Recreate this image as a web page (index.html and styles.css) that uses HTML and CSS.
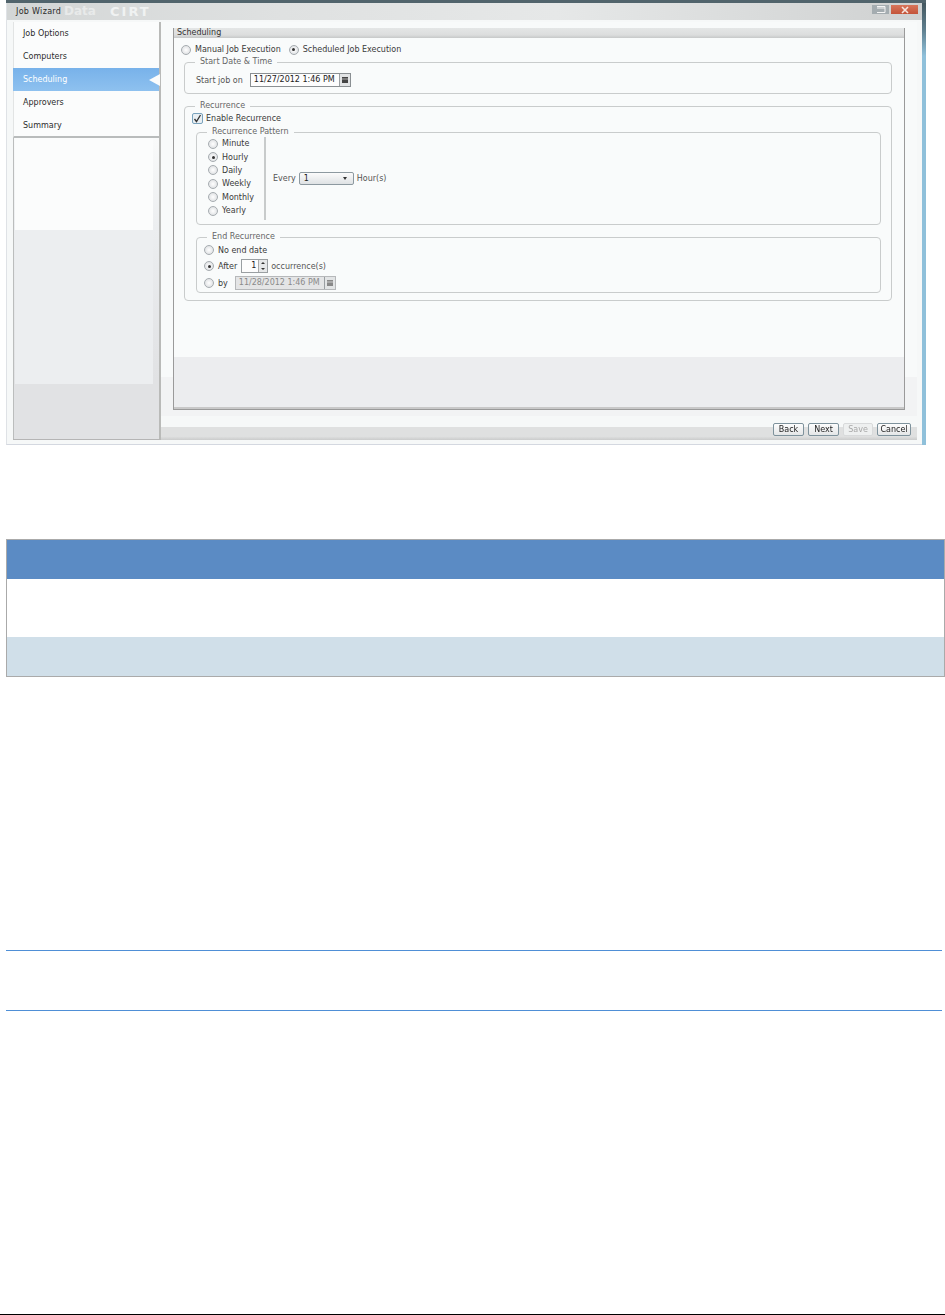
FILE: index.html
```html
<!DOCTYPE html>
<html lang="en">
<head>
<meta charset="utf-8">
<title>Job Wizard</title>
<link rel="stylesheet" href="styles.css">
</head>
<body>
<div class="page">
  <section class="shot">
    <div class="topstrip"></div>
    <div class="winrow">
      <div class="window">
        <header class="titlebar">
          <span class="title">Job Wizard</span>
          <span class="ghost">Data</span>
          <span class="ghost ghost-b">CIRT</span>
          <div class="winbtns">
            <span class="winbtn restore"><svg width="10" height="7" viewBox="0 0 10 7"><path d="M1 .5h8v6H1M1 2h8" fill="none" stroke="#f4f4f4" stroke-width="1"/></svg></span>
            <span class="winbtn close"><svg width="10" height="8" viewBox="0 0 10 8"><path d="M2 1l6 6M8 1L2 7" fill="none" stroke="#f6e6e0" stroke-width="1.6"/></svg></span>
          </div>
        </header>
        <div class="wizard">
          <nav class="side">
            <ul class="steps">
              <li class="step">Job Options</li>
              <li class="step">Computers</li>
              <li class="step active">Scheduling</li>
              <li class="step">Approvers</li>
              <li class="step">Summary</li>
            </ul>
            <div class="side-low">
              <div class="side-a"></div>
              <div class="side-b"></div>
            </div>
          </nav>
          <main class="content">
            <div class="panelwrap">
              <div class="panel">
                <div class="panelhead">Scheduling</div>
                <div class="panelbody">
                  <div class="row toprow">
                    <span class="radio"></span><span class="lbl">Manual Job Execution</span>
                    <span class="radio on"></span><span class="lbl">Scheduled Job Execution</span>
                  </div>
                  <fieldset class="fs fs-start">
                    <legend>Start Date &amp; Time</legend>
                    <div class="row startrow">
                      <span class="lbl soft">Start job on</span>
                      <span class="date"><span class="dateval">11/27/2012 1:46 PM</span><span class="cal"><svg width="6" height="6" viewBox="0 0 6 6"><rect width="6" height="6" fill="#444"/><path d="M0 2h6" stroke="#ccc" stroke-width=".8"/></svg></span></span>
                    </div>
                  </fieldset>
                  <fieldset class="fs fs-rec">
                    <legend>Recurrence</legend>
                    <div class="row enable">
                      <span class="check"><svg width="11" height="11" viewBox="0 0 11 11"><path d="M2.5 6l2 2.5L8.5 2" fill="none" stroke="#333" stroke-width="1.3"/></svg></span>
                      <span class="lbl">Enable Recurrence</span>
                    </div>
                    <fieldset class="fs fs-pat">
                      <legend>Recurrence Pattern</legend>
                      <div class="pat">
                        <div class="patlist">
                          <div class="row r"><span class="radio"></span><span class="lbl">Minute</span></div>
                          <div class="row r"><span class="radio on"></span><span class="lbl">Hourly</span></div>
                          <div class="row r"><span class="radio"></span><span class="lbl">Daily</span></div>
                          <div class="row r"><span class="radio"></span><span class="lbl">Weekly</span></div>
                          <div class="row r"><span class="radio"></span><span class="lbl">Monthly</span></div>
                          <div class="row r"><span class="radio"></span><span class="lbl">Yearly</span></div>
                        </div>
                        <div class="row every">
                          <span class="lbl soft">Every</span>
                          <span class="combo"><span>1</span><span class="arrow"></span></span>
                          <span class="lbl soft">Hour(s)</span>
                        </div>
                      </div>
                    </fieldset>
                    <fieldset class="fs fs-end">
                      <legend>End Recurrence</legend>
                      <div class="row e1"><span class="radio"></span><span class="lbl">No end date</span></div>
                      <div class="row e2"><span class="radio on"></span><span class="lbl">After</span>
                        <span class="spin"><span class="spinval">1</span><span class="spinbtns"><i class="up"></i><i class="down"></i></span></span>
                        <span class="lbl soft">occurrence(s)</span></div>
                      <div class="row e3"><span class="radio"></span><span class="lbl">by</span>
                        <span class="date off"><span class="dateval">11/28/2012 1:46 PM</span><span class="cal"><svg width="6" height="6" viewBox="0 0 6 6"><rect width="6" height="6" fill="#888"/><path d="M0 2h6" stroke="#ddd" stroke-width=".8"/></svg></span></span></div>
                    </fieldset>
                  </fieldset>
                </div>
                <div class="panelfoot"></div>
              </div>
            </div>
            <footer class="actions">
              <button class="btn">Back</button>
              <button class="btn">Next</button>
              <button class="btn dis">Save</button>
              <button class="btn">Cancel</button>
            </footer>
          </main>
        </div>
      </div>
      <div class="edge"></div>
    </div>
  </section>
  <section class="table">
    <div class="thead"></div>
    <div class="tbody"></div>
    <div class="tfoot"></div>
  </section>
  <section class="rule-box"></section>
  <div class="pageline"></div>
</div>
</body>
</html>
```
FILE: styles.css
```css
* { box-sizing: border-box; }
html, body { margin: 0; padding: 0; background: #fff; }
body { font-family: "DejaVu Sans", sans-serif; font-size: 8px; color: #333; }
.page { width: 945px; height: 1315px; display: flex; flex-direction: column; overflow: hidden; }

.shot { margin-left: 6px; width: 920px; height: 445px; flex: none; display: flex; flex-direction: column; filter: blur(0.4px); }
.topstrip { height: 3px; background: #51646c; flex: none; }
.winrow { flex: 1; display: flex; min-height: 0; }
.edge { width: 4px; flex: none; background: linear-gradient(#44575f, #5f7f8e 6%, #8fc0da 12%, #8fc0da); }
.window { flex: 1; min-width: 0; display: flex; flex-direction: column; background: #f6f8f8; border-left: 1px solid #dfe2e6; border-bottom: 1px solid #d4d8e0; }
.titlebar { height: 17px; flex: none; display: flex; align-items: center; position: relative; overflow: hidden; padding-left: 9px; background: linear-gradient(90deg, #d3d6d6, #dfe1e1 30%, #e6e8e8 60%, #cfd1d1); }
.title { color: #2a2a2a; font-size: 8px; letter-spacing: 0.3px; }
.ghost { position: absolute; left: 57px; top: 1px; font-size: 12px; font-weight: bold; color: #e8eaea; white-space: nowrap; }
.ghost-b { left: 103px; font-size: 13px; letter-spacing: 2px; color: #f0f2f2; }
.winbtns { margin-left: auto; margin-right: 4px; display: flex; gap: 2px; align-self: flex-start; margin-top: 2px; }
.winbtn { height: 9px; display: flex; align-items: center; justify-content: center; }
.restore { width: 17px; background: #a4acb0; }
.close { width: 27px; background: linear-gradient(#d8755a, #c3543a); }

.wizard { flex: 1; display: flex; padding: 2px 5px 4px 6px; min-height: 0; }
.side { width: 148px; flex: none; display: flex; flex-direction: column; border-bottom: 1px solid #b5b5b5; border-right: 2px solid #b9bab8; background: #fbfcfc; }
.steps { list-style: none; margin: 0; padding: 0; height: 116px; flex: none; border-bottom: 2px solid #b9bcbc; border-left: 1px solid #e2e4e4; }
.step { height: 23px; display: flex; align-items: center; padding-left: 9px; color: #2c2c2c; font-size: 8px; }
.step.active { color: #fff; background: linear-gradient(#78b2ea, #8ec1ef); position: relative; margin-left: -1px; padding-left: 10px; }
.step.active::after { content: ""; position: absolute; right: -1px; top: 6px; border: 6px solid transparent; border-right: 11px solid #fbfcfc; border-left: 0; }
.side-low { flex: 1; min-height: 0; display: flex; flex-direction: column; background: linear-gradient(#f9fafa, #eceef0 30%, #e1e2e4 80%); border-left: 1px solid #bbbdbd; padding-left: 1px; }
.side-a { height: 92px; flex: none; margin-right: 6px; background: #fbfcfc; }
.side-b { height: 154px; flex: none; margin-right: 6px; background: #eceef0; }

.content { flex: 1; display: flex; flex-direction: column; min-width: 0; }
.panelwrap { flex: 1; padding: 6px 12px 6px 12px; min-height: 0; background: linear-gradient(#f8fafa 90%, #f2f3f4 90%); }
.panel { height: 382px; border: 1px solid #9a9a9a; border-top: 0; display: flex; flex-direction: column; background: #f9fbfb; }
.panelhead { height: 10px; flex: none; padding-left: 3px; line-height: 10px; background: linear-gradient(#e4e6e6, #dcdddd 70%, #c6c8c8); color: #333; }
.panelbody { flex: 1; min-height: 0; padding: 5px 12px 0 10px; }
.panelfoot { height: 52px; flex: none; background: #ecedef; border-bottom: 2px solid #c8c8c8; }
.actions { height: 24px; flex: none; display: flex; justify-content: flex-end; align-items: center; gap: 4px; padding: 3px 6px 0 0; background: linear-gradient(#f6f8f8 45%, #dfe0e0 45%, #dfe0e0 85%, #cbcccc); }
.btn { width: 31px; height: 13px; padding: 0; font: 8px "DejaVu Sans", sans-serif; color: #222; border: 1px solid #7e929c; border-radius: 2px; background: linear-gradient(#fdfdfd, #e4e6e7); }
.btn:last-child { width: 34px; }
.btn.dis { width: 30px; color: #a8a8a8; border-color: #d8dadb; background: #eef0f0; }

.row { display: flex; align-items: center; }
.lbl { color: #3a3a3a; }
.soft { color: #555; }
.radio { width: 10px; height: 10px; flex: none; border-radius: 50%; border: 1px solid #a6acb0; background: radial-gradient(circle, #fff, #d6d9dc); display: flex; align-items: center; justify-content: center; margin-right: 4px; }
.radio.on::after { content: ""; width: 3px; height: 3px; border-radius: 50%; background: #333; }
.toprow { height: 13px; margin-left: -3px; }
.toprow .lbl:nth-child(2) { margin-right: 8px; }

.fs { margin: 0; padding: 0; border: 1px solid #c9cccc; border-radius: 4px; min-width: 0; }
.fs legend { margin-left: 10px; padding: 0 5px; color: #666; font-size: 8px; line-height: 10px; }
.fs-start { margin-top: 1px; height: 37px; }
.startrow { padding: 6px 0 0 11px; }
.startrow .date { margin-left: 7px; }
.fs-rec { margin-top: 7px; height: 200px; padding-top: 1px; }
.enable { padding-left: 7px; height: 13px; }
.check { width: 11px; height: 11px; flex: none; margin-right: 3px; border: 1px solid #7aa3bd; border-radius: 2px; background: #e9eff3; display: flex; align-items: center; justify-content: center; }
.check svg { flex: none; margin: -1px; }
.fs-pat { margin: 2px 10px 0 11px; height: 98px; }
.pat { display: flex; height: 83px; }
.patlist { width: 69px; flex: none; border-right: 2px solid #c8cbcb; padding-left: 11px; }
.r { height: 13.4px; }
.every { padding-left: 7px; gap: 3px; }
.combo { width: 55px; height: 13px; display: flex; align-items: center; justify-content: space-between; padding: 0 6px 0 4px; border: 1px solid #8d99a0; border-radius: 2px; background: linear-gradient(#fbfbfb, #dfe2e4); color: #222; }
.arrow { width: 0; height: 0; border: 2.5px solid transparent; border-top: 3px solid #333; border-bottom: 0; }
.fs-end { margin: 7px 10px 0 11px; height: 61px; }
.e1, .e2, .e3 { padding-left: 7px; }
.e1, .e2 { height: 16px; }
.e3 { height: 18px; }
.e2 .lbl:nth-child(2) { margin-right: 4px; }
.e3 .lbl:nth-child(2) { margin-right: 7px; }
.date { width: 101px; height: 14px; display: flex; border: 1px solid #8a8f92; background: #fdfdfd; flex: none; }
.dateval { flex: 1; padding-left: 3px; line-height: 12px; color: #222; white-space: nowrap; overflow: hidden; }
.cal { width: 11px; flex: none; border-left: 1px solid #9a9fa2; background: #e2e4e5; display: flex; align-items: center; justify-content: center; }
.date.off { background: #e4e5e6; border-color: #b6b8ba; }
.date.off .dateval { color: #8a8a8a; }
.spin { width: 27px; height: 14px; margin-right: 3px; display: flex; border: 1px solid #9a9fa2; background: #fdfdfd; flex: none; }
.spinval { flex: 1; text-align: right; padding-right: 2px; line-height: 11px; color: #222; }
.spinbtns { width: 9px; flex: none; display: flex; flex-direction: column; border-left: 1px solid #aaa; background: #e6e8e9; }
.spinbtns i { flex: 1; display: flex; align-items: center; justify-content: center; }
.up::after { content: ""; border: 2px solid transparent; border-bottom: 2px solid #333; border-top: 0; }
.down::after { content: ""; border: 2px solid transparent; border-top: 2px solid #333; border-bottom: 0; }

.table { margin: 94px 0 0 6px; height: 138px; flex: none; border: 1px solid #aaa; display: flex; flex-direction: column; }
.thead { height: 39px; flex: none; background: #5b8bc4; }
.tbody { height: 58px; flex: none; background: #fff; }
.tfoot { flex: 1; background: #d0dfe9; }
.rule-box { margin: 273px 3px 0 6px; height: 61px; flex: none; border-top: 1px solid #4f8fd6; border-bottom: 1px solid #4f8fd6; }
.pageline { margin-top: auto; height: 1px; flex: none; background: #000; }
```
